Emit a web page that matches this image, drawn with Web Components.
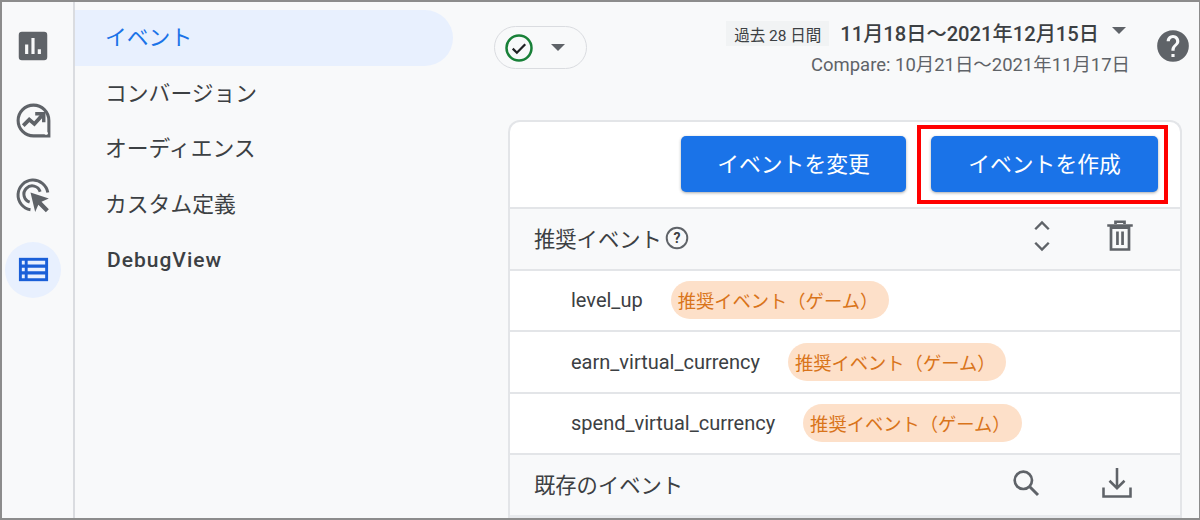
<!DOCTYPE html>
<html lang="ja">
<head>
<meta charset="utf-8">
<style>
  html, body { margin: 0; height: 100%; }
  body {
    font-family: Roboto, "Noto Sans CJK JP", sans-serif;
    color: #3c4043;
    overflow: hidden;
  }
</style>
</head>
<body>
<ga-page></ga-page>

<script>
const ICONS = {
  reports: '<path fill="#5f6368" d="M5 3h14a2 2 0 0 1 2 2v14a2 2 0 0 1-2 2H5a2 2 0 0 1-2-2V5a2 2 0 0 1 2-2zm2 8v6h2v-6H7zm4-4v10h2V7h-2zm4 7v3h2v-3h-2z"/>',
  explore: '<g fill="none" stroke="#5f6368" stroke-width="1.800"><path d="M12 3a9 9 0 1 0 0 18h9v-9a9 9 0 0 0-9-9z"/><path stroke-width="2.200" d="M6 15l3.500-3.500 3 2.500L17 9"/><path stroke-width="2" d="M13 8h5v5"/></g><circle cx="19.400" cy="19.400" r="1" fill="#fff"/>',
  ads: '<g fill="none" stroke="#5f6368" stroke-width="1.800"><path d="M10.500 20.900A9 9 0 1 1 20.900 10.500"/><path d="M10 16.300a5 5 0 1 1 6.300-6.300"/></g><path fill="#5f6368" d="M10.500 10.500l11 3.600-4.400 2 4.400 4.500-1.800 1.800-4.500-4.500-1.900 4.300z"/>',
  admin: '<path fill="#1a5fd8" d="M2 4h20v16H2z"/><path fill="#e8f0fe" d="M4 6h2v2.500H4zM8 6h12v2.500H8zM4 10.800h2v2.400H4zM8 10.800h12v2.400H8zM4 15.500h2V18H4zM8 15.500h12V18H8z"/>',
  check: '<circle cx="12" cy="12" r="10" fill="none" stroke="#188038" stroke-width="2"/><path d="M7 12.500l3.300 3.300L17 9" fill="none" stroke="#202124" stroke-width="1.800"/>',
  help: '<path fill="#5f6368" d="M12 2a10 10 0 1 0 0 20 10 10 0 0 0 0-20zm1 17h-2v-2h2v2zm2.070-7.750l-.9.920C13.450 12.900 13 13.500 13 15h-2v-.5c0-1.100.45-2.100 1.170-2.830l1.240-1.260c.37-.36.59-.86.59-1.410 0-1.100-.9-2-2-2s-2 .9-2 2H8c0-2.210 1.790-4 4-4s4 1.790 4 4c0 .88-.36 1.680-.93 2.250z"/>',
  unfold: '<path fill="none" stroke="#5f6368" stroke-width="1.600" d="M7.500 7.500L12 3l4.500 4.500M7.500 16.500L12 21l4.500-4.500"/>',
  trash: '<path fill="none" stroke="#5f6368" stroke-width="1.800" d="M6 6.500h12V21H6zM3.500 5h17M9 4V2.500h6V4M10.300 9v9M13.700 9v9"/>',
  search: '<circle cx="10" cy="10" r="6.500" fill="none" stroke="#5f6368" stroke-width="2"/><path d="M15 15l6 6" stroke="#5f6368" stroke-width="2.200"/>',
  download: '<path fill="none" stroke="#5f6368" stroke-width="1.700" d="M12 2v13M7 10.500l5 5 5-5M3 15v6h18v-6"/>'
};

function icon(name, size) {
  return `<svg width="${size}" height="${size}" viewBox="0 0 24 24" aria-hidden="true">${ICONS[name]}</svg>`;
}

class GaRail extends HTMLElement {
  connectedCallback() {
    this.attachShadow({ mode: 'open' });
    this.shadowRoot.innerHTML = `
      <style>
        :host {
          display: flex;
          flex-direction: column;
          gap: 18.500px;
          width: 73px;
          padding: 16px 0 0 3px;
          box-sizing: border-box;
          border-right: 2px solid #dadce0;
          flex: none;
        }
        .item {
          width: 56px;
          height: 56px;
          border-radius: 50%;
          display: flex;
          align-items: center;
          justify-content: center;
        }
        .active { background: #e8f0fe; }
      </style>
      <div class="item">${icon('reports', 38)}</div>
      <div class="item">${icon('explore', 41)}</div>
      <div class="item">${icon('ads', 40)}</div>
      <div class="item active">${icon('admin', 35)}</div>
    `;
  }
}
customElements.define('ga-rail', GaRail);

class GaNav extends HTMLElement {
  connectedCallback() {
    this.attachShadow({ mode: 'open' });
    const items = ['イベント', 'コンバージョン', 'オーディエンス', 'カスタム定義', 'DebugView'];
    this.shadowRoot.innerHTML = `
      <style>
        :host {
          display: block;
          width: 378px;
          padding-top: 8px;
          flex: none;
        }
        .item {
          height: 55.500px;
          box-sizing: border-box;
          padding: 0 0 4px 30px;
          display: flex;
          align-items: center;
          font-size: 21.800px;
          color: #3c4043;
          border-radius: 0 28px 28px 0;
        }
        .active { background: #e8f0fe; color: #1a73e8; }
        .latin { font-size: 21px; font-weight: 500; letter-spacing: 1px; padding: 0 0 0 32px; }
      </style>
      ${items.map((t, i) => `<div class="item ${i === 0 ? 'active' : ''} ${i === 4 ? 'latin' : ''}">${t}</div>`).join('')}
    `;
  }
}
customElements.define('ga-nav', GaNav);

class GaFilterBar extends HTMLElement {
  connectedCallback() {
    this.attachShadow({ mode: 'open' });
    this.shadowRoot.innerHTML = `
      <style>
        :host {
          display: flex;
          justify-content: space-between;
          height: 110px;
          padding-left: 41px;
          padding-right: 7px;
        }
        .pill {
          margin-top: 16px;
          width: 93px;
          height: 43px;
          box-sizing: border-box;
          border: 1px solid #dadce0;
          border-radius: 22px;
          display: flex;
          align-items: center;
          padding-left: 9px;
          gap: 17px;
        }
        .caret {
          width: 0;
          height: 0;
          border-left: 7.500px solid transparent;
          border-right: 7.500px solid transparent;
          border-top: 7.500px solid #5f6368;
        }
        .right { display: flex; gap: 24px; padding-top: 11px; }
        .dates { display: flex; flex-direction: column; align-items: flex-end; }
        .line { display: flex; align-items: center; height: 25px; }
        .tag {
          width: 103px;
          height: 25px;
          background: #f1f3f4;
          font-size: 15.500px;
          display: flex;
          align-items: center;
          justify-content: center;
          color: #3c4043;
          white-space: nowrap;
        }
        .range {
          font-size: 20.200px;
          font-weight: 500;
          margin: -2px 0 0 11px;
          white-space: nowrap;
        }
        .line .caret { margin-left: 13px; margin-right: 4px; margin-top: -6px; }
        .compare { font-size: 18.450px; margin-top: 4px; white-space: nowrap; color: #5f6368; }
        .help { margin-top: 6px; display: flex; }
      </style>
      <div class="pill">${icon('check', 30)}<span class="caret"></span></div>
      <div class="right">
        <div class="dates">
          <div class="line">
            <span class="tag">過去 28 日間</span>
            <span class="range">11月18日～2021年12月15日</span>
            <span class="caret"></span>
          </div>
          <div class="compare">Compare: 10月21日～2021年11月17日</div>
        </div>
        <div class="help">${icon('help', 38)}</div>
      </div>
    `;
  }
}
customElements.define('ga-filter-bar', GaFilterBar);

class GaButton extends HTMLElement {
  connectedCallback() {
    this.attachShadow({ mode: 'open' });
    this.shadowRoot.innerHTML = `
      <style>
        :host {
          display: flex;
          align-items: center;
          justify-content: center;
          position: relative;
          height: 56px;
          box-sizing: border-box;
          padding-bottom: 3px;
          border-radius: 5px;
          background: #1a73e8;
          color: #fff;
          font-size: 21.800px;
          box-shadow: 0 1px 3px rgba(60, 64, 67, .45);
        }
        .mark {
          display: none;
          position: absolute;
          left: -14px;
          right: -10px;
          top: -11px;
          bottom: -12px;
          border: 4px solid #ff0000;
        }
        :host([marked]) .mark { display: block; }
      </style>
      <slot></slot>
      <span class="mark"></span>
    `;
  }
}
customElements.define('ga-button', GaButton);

class GaSection extends HTMLElement {
  connectedCallback() {
    this.attachShadow({ mode: 'open' });
    this.shadowRoot.innerHTML = `
      <style>
        :host {
          display: flex;
          align-items: center;
          height: 59.500px;
          padding: 0 42px 0 24px;
          background: #f8f9fa;
          border-top: 2px solid #e3e5e8;
          font-size: 21.300px;
          color: #3c4043;
        }
        .title { flex: 1; display: flex; align-items: center; gap: 2px; margin-top: -2px; }
        .tools { display: flex; align-items: center; }
      </style>
      <div class="title"><slot></slot></div>
      <div class="tools"><slot name="tools"></slot></div>
    `;
  }
}
customElements.define('ga-section', GaSection);

class GaEventRow extends HTMLElement {
  connectedCallback() {
    this.attachShadow({ mode: 'open' });
    this.shadowRoot.innerHTML = `
      <style>
        :host {
          display: flex;
          align-items: center;
          height: 59.500px;
          padding-left: 61px;
          background: #fff;
          border-top: 2px solid #e3e5e8;
          gap: 28px;
          font-size: 20px;
          color: #3c4043;
        }
        .chip {
          height: 38px;
          padding: 0 11px 0 7px;
          border-radius: 19px;
          background: #fde0c9;
          color: #d9741a;
          font-size: 18.300px;
          display: flex;
          align-items: center;
          white-space: nowrap;
        }
      </style>
      <span><slot></slot></span>
      <span class="chip">推奨イベント（ゲーム）</span>
    `;
  }
}
customElements.define('ga-event-row', GaEventRow);

class GaCard extends HTMLElement {
  connectedCallback() {
    this.attachShadow({ mode: 'open' });
    this.shadowRoot.innerHTML = `
      <style>
        :host {
          display: block;
          margin: 0 0 0 55px;
          width: 674px;
          box-sizing: border-box;
          border: 2px solid #e3e5e8;
          border-bottom: 0;
          border-radius: 12px 12px 0 0;
          background: #e8eaed;
          flex: 1;
        }
        .actions {
          display: grid;
          grid-template-columns: 225px 227px;
          gap: 25px;
          justify-content: end;
          padding: 14px 22px 15px 0;
          background: #fff;
          border-radius: 10px 10px 0 0;
        }
      </style>
      <div class="actions"><slot name="actions"></slot></div>
      <slot></slot>
    `;
  }
}
customElements.define('ga-card', GaCard);

class GaPage extends HTMLElement {
  connectedCallback() {
    this.attachShadow({ mode: 'open' });
    this.shadowRoot.innerHTML = `
      <style>
        :host {
          display: flex;
          box-sizing: border-box;
          height: 520px;
          background: #f8f9fa;
          border: 2px solid #8c8c8c;
          border-right-width: 1px;
        }
        main {
          flex: 1;
          display: flex;
          flex-direction: column;
          padding-top: 8px;
          min-width: 0;
        }
        .q { display: inline-flex; }
      </style>
      <ga-rail></ga-rail>
      <ga-nav></ga-nav>
      <main>
        <ga-filter-bar></ga-filter-bar>
        <ga-card>
          <ga-button slot="actions">イベントを変更</ga-button>
          <ga-button slot="actions" marked>イベントを作成</ga-button>
          <ga-section>推奨イベント
            <span class="q"><svg width="26" height="26" viewBox="0 0 24 24"><circle cx="12" cy="12" r="9.500" fill="none" stroke="#5f6368" stroke-width="1.800"/><text x="12" y="16.500" text-anchor="middle" font-size="13" font-weight="700" fill="#3c4043">?</text></svg></span>
            <span slot="tools" style="display:flex;gap:42px;margin-top:-6px">${icon('unfold', 36)}${icon('trash', 36)}</span>
          </ga-section>
          <ga-event-row>level_up</ga-event-row>
          <ga-event-row>earn_virtual_currency</ga-event-row>
          <ga-event-row>spend_virtual_currency</ga-event-row>
          <ga-section>既存のイベント
            <span slot="tools" style="display:flex;gap:57px;align-items:center;margin-right:3px;margin-top:-4px">${icon('search', 32)}${icon('download', 36)}</span>
          </ga-section>
        </ga-card>
      </main>
    `;
  }
}
customElements.define('ga-page', GaPage);
</script>
</body>
</html>
